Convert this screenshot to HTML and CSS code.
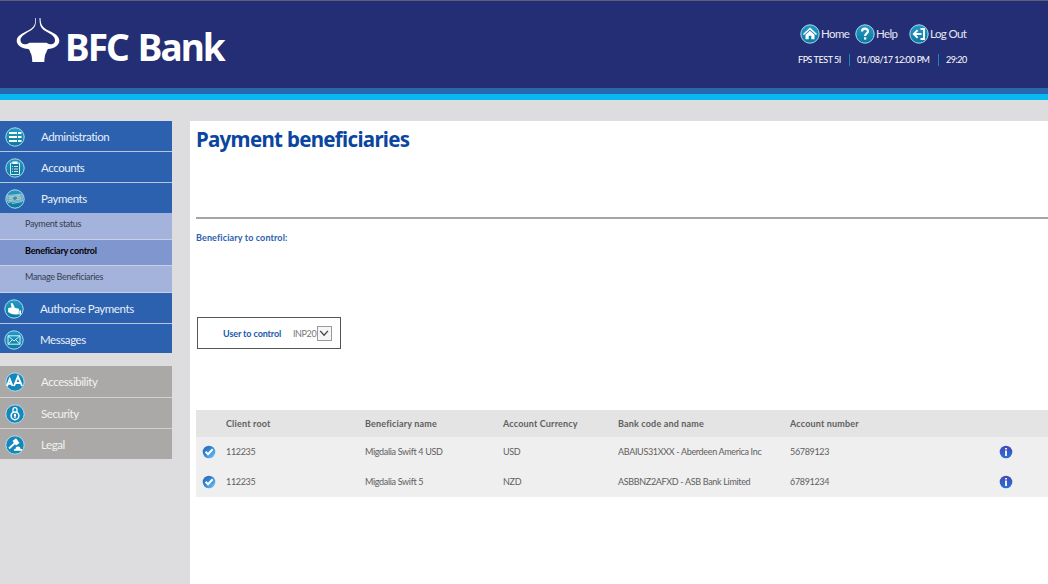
FILE: index.html
```html
<!DOCTYPE html>
<html lang="en">
<head>
<meta charset="utf-8">
<title>BFC Bank - Payment beneficiaries</title>
<link rel="stylesheet" href="styles.css">
</head>
<body>
<svg width="0" height="0" class="defs" aria-hidden="true">
  <defs>
    <linearGradient id="teal" x1="0" y1="0" x2="0" y2="1"><stop offset="0" stop-color="#249bc9"/><stop offset="1" stop-color="#0b789f"/></linearGradient>
    <linearGradient id="tick" x1="0" y1="0" x2="1" y2="1"><stop offset="0" stop-color="#2462b5"/><stop offset=".55" stop-color="#3a8edb"/><stop offset="1" stop-color="#79d3fb"/></linearGradient>
    <linearGradient id="info" x1="0" y1="0" x2="0" y2="1"><stop offset="0" stop-color="#4a46b0"/><stop offset="1" stop-color="#2673dc"/></linearGradient>
  </defs>
</svg>
<header class="header">
  <div class="logo">
    <svg class="bull" viewBox="0 0 46 48">
      <path d="M19.300 1C19.500 8 18 10.500 12 13.500C5 17 1 19 .7 23.500C.5 28.500 6 31.500 12.500 32Q14 33 14.300 35.500Q16 37.500 16.300 45H28.300Q28.600 37.500 30.300 35.500Q30.700 33 32 32C38 31.500 43.500 28.500 43.300 23.500C43 18.500 38 16 32.500 13.500C26.500 10.500 24.700 8 24.500 1H23.500C23.500 9 25 12 31 15C36 17.500 39.200 20 39 23.500C38.800 27.500 35 28.500 30.500 25.800H13.500C9 28.500 5 27.500 4.500 23.500C4.100 20 8 17.500 13 14.500C18.500 11.500 20.300 9 20 1Z" fill="#fff"/>
    </svg>
    <span class="logo-text">BFC Bank</span>
  </div>
  <div class="tools">
    <div class="links">
      <a class="home"><svg class="ico" viewBox="0 0 20 20"><circle cx="10" cy="10" r="9.200" fill="url(#teal)" stroke="#a9dcec"/><path d="M3.500 10.500L10 4.500L16.500 10.500" fill="none" stroke="#fff" stroke-width="1.600"/><path d="M5.500 10.800L10 6.800L14.500 10.800V15.300H11.300V11.800H8.700V15.300H5.500Z" fill="#fff"/></svg>Home</a>
      <a class="help"><svg class="ico" viewBox="0 0 20 20"><circle cx="10" cy="10" r="9.200" fill="url(#teal)" stroke="#a9dcec"/><path d="M7 7.500C7 3.700 13 3.800 13 7.200C13 9.400 10.100 9.200 10.100 12" fill="none" stroke="#fff" stroke-width="2.200"/><rect x="9" y="13.300" width="2.300" height="2.300" fill="#fff"/></svg>Help</a>
      <a class="logout"><svg class="ico" viewBox="0 0 20 20"><circle cx="10" cy="10" r="9.200" fill="url(#teal)" stroke="#a9dcec"/><path d="M12.500 10H5M8.600 6.200L4.800 10L8.600 13.800M11.500 5H15V15H11.500" fill="none" stroke="#fff" stroke-width="1.900"/></svg>Log Out</a>
    </div>
    <div class="status"><span class="user">FPS TEST 5I</span><span class="date">01/08/17 12:00 PM</span><span class="timer">29:20</span></div>
  </div>
</header>
<div class="page">
  <nav class="side">
    <div class="menu">
      <a class="item"><svg class="ico" viewBox="0 0 20 20"><circle cx="10" cy="10" r="9.200" fill="url(#teal)" stroke="#a9dcec"/><path d="M4 6H12M4 10H12M4 14H12M13 6H16.500M13 10H16.500M13 14H16.500" stroke="#fff" stroke-width="2"/></svg><span>Administration</span></a>
      <a class="item"><svg class="ico" viewBox="0 0 20 20"><circle cx="10" cy="10" r="9.200" fill="url(#teal)" stroke="#a9dcec"/><path d="M5.500 5H14.500V16.500H5.500Z" fill="#147ba3" stroke="#d4edf4"/><path d="M7.500 3.500H12.500V6H7.500Z" fill="#fff"/><path d="M7 8.500H8M9 8.500H13M7 11H8M9 11H13M7 13.500H8M9 13.500H13" stroke="#c5e6f0"/></svg><span>Accounts</span></a>
      <a class="item"><svg class="ico" viewBox="0 0 20 20"><circle cx="10" cy="10" r="9.200" fill="url(#teal)" stroke="#a9dcec"/><path d="M1.500 6.500L17 5L18 11.500L3 13.500Z" fill="#6ba9bd" stroke="#a9cfda" stroke-width=".7"/><path d="M3.500 8L15 6.500M4 9.500L8 9M12 8.500L16 8M4 11.500L16.500 9.800M7 14.500L17 12.500" stroke="#d4e6ea" stroke-width=".7"/><circle cx="10" cy="9.300" r="1.800" fill="#3b8ba5"/></svg><span>Payments</span></a>
    </div>
    <div class="submenu">
      <a>Payment status</a>
      <a class="active">Beneficiary control</a>
      <a>Manage Beneficiaries</a>
    </div>
    <div class="menu lower">
      <a class="item"><svg class="ico" viewBox="0 0 20 20"><circle cx="10" cy="10" r="9.200" fill="url(#teal)" stroke="#a9dcec"/><path d="M4.200 9L7.500 8.500L6.800 4.600Q7.500 3.300 8.900 4.400L10.800 8.800L14.800 9.700Q15.600 11 14.800 12.200V15.200Q10 16 6.500 14.500L4 13Z" fill="#fff"/><path d="M15.300 11.500H17V15.500H15.300Z" fill="#fff"/></svg><span>Authorise Payments</span></a>
      <a class="item"><svg class="ico" viewBox="0 0 20 20"><circle cx="10" cy="10" r="9.200" fill="url(#teal)" stroke="#a9dcec"/><path d="M4 5.800H16V14.200H4ZM4 5.800L10 11L16 5.800M4 14.200L8.300 9.700M16 14.200L11.700 9.700" fill="none" stroke="#d2f1fa" stroke-width="1"/></svg><span>Messages</span></a>
    </div>
    <div class="menu grey">
      <a class="item"><svg class="ico" viewBox="0 0 20 20"><circle cx="10" cy="10" r="9.200" fill="#1488bc" stroke="#b9dceb"/><path d="M2 14L4.700 7L7.500 14M3 11.800H6.500M9 14L13 4.500L17 14M10.400 11H15.700" fill="none" stroke="#fff" stroke-width="1.900"/></svg><span>Accessibility</span></a>
      <a class="item"><svg class="ico" viewBox="0 0 20 20"><circle cx="10" cy="10" r="9.200" fill="#1488bc" stroke="#b9dceb"/><path d="M8 8V5.500Q8 3.600 10 3.600T12 5.500V8" fill="none" stroke="#fff" stroke-width="1.300"/><circle cx="10" cy="11.800" r="3.900" fill="none" stroke="#fff" stroke-width="1.500"/><circle cx="10" cy="11" r="1.200" fill="#fff"/><path d="M10 11V14" stroke="#fff" stroke-width="1.300"/></svg><span>Security</span></a>
      <a class="item"><svg class="ico" viewBox="0 0 20 20"><circle cx="10" cy="10" r="9.200" fill="#1488bc" stroke="#b9dceb"/><path d="M7.500 6L11 3.300L14.500 8L11 10.500Z" fill="#fff"/><path d="M10 8L4 13.500" stroke="#fff" stroke-width="1.800"/><path d="M10.500 14Q10.500 11.500 13 11.500T15.500 14H17V15.800H9V14Z" fill="#fff"/></svg><span>Legal</span></a>
    </div>
  </nav>
  <main class="main">
    <h1>Payment beneficiaries</h1>
    <h2>Beneficiary to control:</h2>
    <div class="filter"><label>User to control</label><span class="value">INP20</span><span class="select"><svg viewBox="0 0 15 15"><path d="M2.500 4.500L7 9.500L11.500 4.500" fill="none" stroke="#444" stroke-width="1.500"/></svg></span></div>
    <div class="table">
      <div class="row head"><span></span><span>Client root</span><span>Beneficiary name</span><span>Account Currency</span><span>Bank code and name</span><span>Account number</span><span></span></div>
      <div class="row"><svg viewBox="0 0 14 14"><circle cx="7" cy="7" r="6.300" fill="url(#tick)"/><path d="M3.600 6.800L6 9.300L10.700 4.300" fill="none" stroke="#fff" stroke-width="2"/></svg><span>112235</span><span>Migdalia Swift 4 USD</span><span>USD</span><span>ABAIUS31XXX - Aberdeen America Inc</span><span>56789123</span><svg viewBox="0 0 14 14"><circle cx="7" cy="7" r="6.300" fill="url(#info)"/><path d="M7 3V4.600M7 5.500V11" stroke="#fff" stroke-width="1.800"/></svg></div>
      <div class="row"><svg viewBox="0 0 14 14"><circle cx="7" cy="7" r="6.300" fill="url(#tick)"/><path d="M3.600 6.800L6 9.300L10.700 4.300" fill="none" stroke="#fff" stroke-width="2"/></svg><span>112235</span><span>Migdalia Swift 5</span><span>NZD</span><span>ASBBNZ2AFXD - ASB Bank Limited</span><span>67891234</span><svg viewBox="0 0 14 14"><circle cx="7" cy="7" r="6.300" fill="url(#info)"/><path d="M7 3V4.600M7 5.500V11" stroke="#fff" stroke-width="1.800"/></svg></div>
    </div>
  </main>
</div>
</body>
</html>
```

FILE: styles.css
```css
* { box-sizing: border-box; }
body { margin: 0; height: 584px; overflow: hidden; background: #dddddf; font-family: Lato, "Noto Sans", sans-serif; white-space: nowrap; }
.defs { position: absolute; }
.ico { display: block; width: 20px; height: 20px; flex: none; }

.header { height: 100px; display: flex; background: linear-gradient(#2968ae 0 0) 0 88px / 100% 6px no-repeat, linear-gradient(#08b8f0 0 0) 0 94px / 100% 6px no-repeat, #242e74; border-top: 1px solid #5d6076; background-origin: border-box; }
.logo { display: flex; width: 798px; padding: 16px 0 0 16px; }
.bull { width: 46px; height: 48px; }
.logo-text { margin: 4px 0 0 3px; color: #fff; font: bold 37px/52px "Noto Sans", sans-serif; letter-spacing: -1.900px; word-spacing: 2px; }
.tools { color: #e4e6f2; }
.links { display: flex; padding: 22px 0 0 2px; }
.links a { display: flex; align-items: center; gap: 1px; padding-top: 1px; font-size: 11.500px; line-height: 20px; letter-spacing: -.6px; }
.home { width: 55px; }
.help { width: 54px; }
.status { display: flex; align-items: center; height: 12px; margin-top: 10px; font-size: 9px; line-height: 12px; letter-spacing: -.45px; color: #fff; }
.status span + span { border-left: 1px solid #1687b5; padding-left: 7px; }
.status .user { width: 51px; }
.status .date { width: 89px; letter-spacing: -.5px; }

.page { display: flex; height: 484px; padding-top: 21px; }
.side { width: 172px; margin-right: 18px; flex: none; }
.menu { display: flex; flex-direction: column; gap: 1px; background: #b9c5df; }
.item { height: 30px; display: flex; align-items: center; padding: 1px 0 0 5px; gap: 16px; background: #2b61ae; color: #e8eff8; font-size: 11.500px; line-height: 20px; letter-spacing: -.42px; }
.submenu { display: flex; flex-direction: column; gap: 1px; height: 80px; padding-bottom: 1px; background: #c9cfe6; color: #363d52; font-size: 9px; letter-spacing: -.32px; }
.submenu a { flex: 1; padding: 5px 0 0 25px; line-height: 12px; background: #a4b3dc; }
.submenu .active { background: #8096ce; color: #000; font-weight: bold; letter-spacing: -.2px; }
.lower { height: 60px; }
.lower .item { padding-left: 4px; }
.lower .item:last-child { height: 29px; padding-top: 3px; }
.grey { margin-top: 13px; background: #d0d0d1; }
.grey .item { background: #aaa9a8; color: #f2f2f2; }
.grey .item:first-child { height: 31px; }

.main { flex: 1; background: #fff; padding-left: 6px; }
h1 { margin: 0; height: 98px; padding-top: 3px; border-bottom: 2px solid #a5a5a5; color: #0a469f; font-family: "Noto Sans", sans-serif; font-size: 20.500px; line-height: 30px; letter-spacing: -.7px; }
h2 { margin: 12px 0 0; color: #2b61ae; font-size: 9px; line-height: 14px; letter-spacing: .12px; }
.filter { width: 144px; height: 32px; margin: 72px 0 0 1px; display: flex; align-items: center; border: 1px solid #555; color: #777; font-size: 9px; padding-left: 25px; letter-spacing: -.1px; }
.filter label { width: 70px; color: #2059ad; font-weight: bold; }
.filter .value { width: 24px; letter-spacing: -.4px; }
.select { width: 15px; height: 15px; border: 1px solid #999; background: #f6f6f6; }
.select svg { display: block; }
.table { margin-top: 61px; color: #606060; font-size: 9px; letter-spacing: -.33px; }
.row { display: grid; grid-template-columns: 24px 139px 138px 115px 172px 209px 14px; align-items: center; height: 30px; padding: 0 0 1px 6px; background: #efefef; }
.row svg { width: 14px; height: 14px; }
.head { height: 27px; padding-bottom: 0; background: #e4e4e4; font-weight: bold; letter-spacing: .17px; }
```
